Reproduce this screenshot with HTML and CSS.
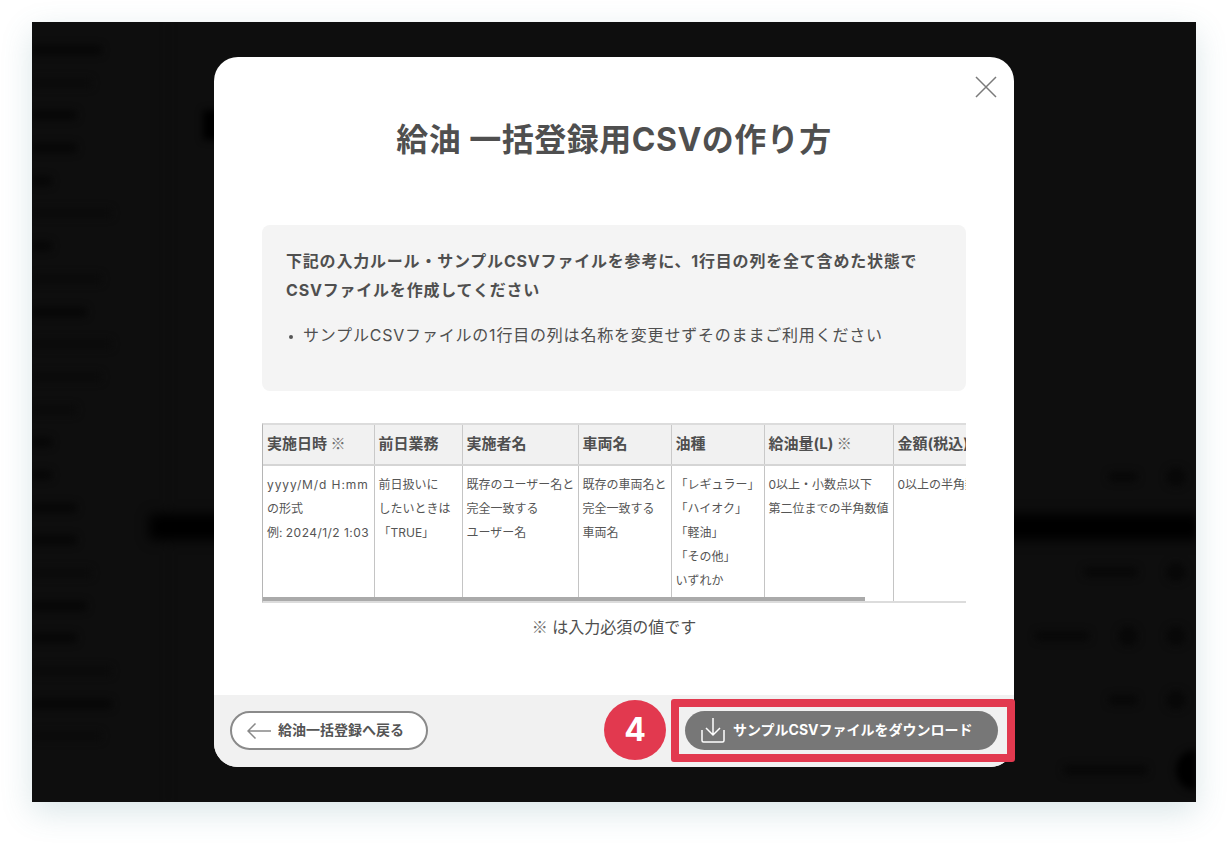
FILE: index.html
```html
<!DOCTYPE html>
<html lang="ja">
<head>
<meta charset="utf-8">
<title>給油 一括登録用CSVの作り方</title>
<link rel="stylesheet" href="styles.css">
</head>
<body>
<div class="frame">
  <div class="backdrop" aria-hidden="true">
    <div class="side">
      <i class="w70"></i><i class="w60 faint"></i><i class="w45"></i><i class="w45"></i><i class="w20"></i><i class="w80 faint"></i><i class="w20"></i><i class="w70 faint"></i><i class="w55"></i><i class="w80 faint"></i><i class="w70 faint"></i><i class="w45 faint"></i><i class="w20"></i><i class="w20"></i><i class="w45"></i><i class="w45"></i><i class="w60 faint"></i><i class="w55"></i><i class="w45"></i><i class="w80 faint"></i><i class="w80"></i><i class="w70 faint"></i>
    </div>
    <div class="main">
      <div class="blob-top"></div>
      <div class="blob-row r1"><b class="s60"></b><b class="dot"></b></div>
      <div class="band"></div>
      <div class="blob-row r2"><b class="s80"></b><b class="dot"></b></div>
      <div class="blob-row r3"><b class="s80"></b><b class="dot"></b><b class="dot"></b></div>
      <div class="blob-row r4"><b class="s60"></b><b class="dot"></b></div>
      <div class="blob-row r5"><b class="s110"></b><b class="big"></b></div>
    </div>
  </div>

  <section class="modal">
    <svg class="close" viewBox="0 0 22 22" width="22" height="22"><path d="M1 1l20 20M21 1L1 21"/></svg>
    <div class="body">
      <h1 class="title">給油 一括登録用CSVの作り方</h1>
      <div class="info">
        <p class="lead">下記の入力ルール・サンプルCSVファイルを参考に、1行目の列を全て含めた状態で<br>CSVファイルを作成してください</p>
        <ul class="rules"><li>サンプルCSVファイルの1行目の列は名称を変更せずそのままご利用ください</li></ul>
      </div>
      <div class="scroller">
        <table class="sheet">
          <colgroup><col class="c1"><col class="c2"><col class="c3"><col class="c4"><col class="c5"><col class="c6"><col class="c7"></colgroup>
          <thead>
            <tr><th>実施日時 <span class="mark">※</span></th><th>前日業務</th><th>実施者名</th><th>車両名</th><th>油種</th><th>給油量(L) <span class="mark">※</span></th><th>金額(税込)</th></tr>
          </thead>
          <tbody>
            <tr>
              <td><span class="fmt">yyyy/M/d H:mm</span><br>の形式<br>例: <span class="latin">2024/1/2 1:03</span></td>
              <td>前日扱いに<br>したいときは<br>「TRUE」</td>
              <td>既存のユーザー名と<br>完全一致する<br>ユーザー名</td>
              <td>既存の車両名と<br>完全一致する<br>車両名</td>
              <td>「レギュラー」<br>「ハイオク」<br>「軽油」<br>「その他」<br>いずれか</td>
              <td>0以上・小数点以下<br>第二位までの半角数値</td>
              <td>0以上の半角数値</td>
            </tr>
          </tbody>
        </table>
        <div class="thumb"></div>
      </div>
      <p class="note"><span class="mark">※</span> は入力必須の値です</p>
    </div>
    <footer class="foot">
      <a class="btn back">
        <svg viewBox="0 0 24 16" width="24" height="16"><path d="M24 8H1M8.500 .5L1 8l7.500 7.500"/></svg>
        <span class="lbl">給油一括登録へ戻る</span>
      </a>
      <a class="btn dl">
        <svg viewBox="0 0 24 25" width="24" height="25"><path d="M12 0v17M5 10l7 7 7-7M1 12v10.500a1.500 1.500 0 0 0 1.500 1.500h19a1.500 1.500 0 0 0 1.500-1.500V12"/></svg>
        <span class="lbl">サンプルCSVファイルをダウンロード</span>
      </a>
      <span class="badge">4</span>
      <span class="highlight"></span>
    </footer>
  </section>
</div>
</body>
</html>
```
FILE: styles.css
```css
* { box-sizing: border-box; }
html, body { margin: 0; height: 100%; background: #fff; }
body {
  padding: 22px 32px 0;
  font-family: Inter, "Noto Sans CJK JP", sans-serif;
  color: #4f4f4f;
  overflow: hidden;
}
.frame {
  position: relative;
  height: 780px;
  background: #0e0e0e;
  box-shadow: 0 10px 30px rgba(70, 130, 140, .2);
  overflow: hidden;
}
.backdrop { display: flex; height: 100%; overflow: hidden; filter: blur(3.500px); }
.side {
  width: 136px;
  flex: none;
  display: flex;
  flex-direction: column;
  gap: 22.700px;
  padding-top: 23px;
}
.side i { display: block; height: 10px; border-radius: 4px; background: #070707; }
.side i.faint { background: #0b0b0b; }
.w20 { width: 20px; } .w45 { width: 45px; } .w55 { width: 55px; }
.w60 { width: 60px; } .w70 { width: 70px; } .w80 { width: 80px; }
.main { flex: 1; display: flex; flex-direction: column; border-left: 1px solid #0c0c0c; }
.blob-top { height: 30px; margin: 88px 0 0 34px; width: 60px; background: #000; }
.blob-row { display: flex; justify-content: flex-end; align-items: center; gap: 28px; padding-right: 10px; height: 24px; }
.blob-row b { display: block; height: 10px; border-radius: 5px; background: #080808; }
.blob-row b.dot { width: 20px; height: 20px; border-radius: 50%; }
.blob-row b.s60 { width: 30px; }
.blob-row b.s80 { width: 55px; }
.blob-row b.s110 { width: 85px; }
.blob-row b.big { width: 36px; height: 40px; border-radius: 50%; background: #000; margin-right: -26px; }
.r1 { margin-top: 325px; }
.band { height: 26px; margin: 25px -20px 0; background: #000; filter: blur(5px); }
.r2 { margin-top: 20px; }
.r3 { margin-top: 40px; }
.r4 { margin-top: 40px; }
.r5 { margin-top: 46px; }

.modal {
  position: absolute;
  left: 182px;
  top: 35px;
  width: 800px;
  height: 710px;
  background: #fff;
  border-radius: 24px;
  display: flex;
  flex-direction: column;
}
.close { position: absolute; top: 19px; right: 17px; fill: none; stroke: #7a7a7a; stroke-width: 1.500; }
.body { flex: 1; padding: 0 48px; }
.title {
  margin: 60px 0 0;
  font-size: 32px;
  line-height: 46px;
  font-weight: 700;
  letter-spacing: .5px;
  text-align: center;
  color: #4f4f4f;
}
.info {
  margin-top: 62px;
  height: 166px;
  padding: 22px 24px;
  background: #f4f4f4;
  border-radius: 8px;
}
.lead { margin: 0; font-size: 16px; line-height: 29px; font-weight: 700; letter-spacing: .8px; }
.rules { margin: 16px 0 0; padding: 0; list-style: none; font-size: 16px; line-height: 29px; letter-spacing: .8px; }
.rules li { display: flex; align-items: center; }
.rules li::before { content: ""; width: 4px; height: 4px; margin: 3px 10px 0 3px; border-radius: 50%; background: #555; flex: none; }
.scroller {
  position: relative;
  margin-top: 32px;
  height: 180px;
  overflow: hidden;
  border-bottom: 2px solid #dcdcdc;
  border-top: 2px solid #dcdcdc;
  border-left: 1px solid #b5b5b5;
}
.sheet { width: 822px; border-collapse: collapse; table-layout: fixed; }
.c1 { width: 111px; } .c2 { width: 88px; } .c3 { width: 116px; } .c4 { width: 93px; }
.c5 { width: 93px; } .c6 { width: 129px; } .c7 { width: 192px; }
.sheet th {
  height: 40px;
  padding: 0 4px 4px;
  background: #f1f1f1;
  border-right: 1px solid #c9c9c9;
  border-bottom: 2px solid #d5d5d5;
  font-size: 15px;
  font-weight: 700;
  text-align: left;
  white-space: nowrap;
  color: #4f4f4f;
}
.mark { font-family: "Noto Sans CJK JP", sans-serif; font-weight: 400; color: #6f6f6f; }
.sheet td {
  height: 136px;
  padding: 7px 4px 0;
  vertical-align: top;
  border-right: 1px solid #c4c4c4;
  font-size: 12px;
  line-height: 24px;
  white-space: nowrap;
  color: #555;
}
.fmt { letter-spacing: .9px; }
.latin { letter-spacing: .45px; }
.thumb { position: absolute; left: -1px; bottom: 0; width: 603px; height: 4px; background: #aaa; }
.note { margin: 12px 0 0; text-align: center; font-size: 16px; line-height: 22px; color: #4f4f4f; }
.foot {
  position: relative;
  height: 72px;
  flex: none;
  display: flex;
  justify-content: space-between;
  align-items: flex-start;
  padding: 16px 16px 0;
  background: #f1f1f1;
  border-radius: 0 0 24px 24px;
}
.btn {
  display: flex;
  align-items: center;
  height: 39px;
  border-radius: 20px;
  font-size: 14px;
  font-weight: 700;
  white-space: nowrap;
}
.lbl { margin-bottom: 3px; }
.back { width: 198px; padding-left: 15px; gap: 7px; background: #fff; border: 2px solid #8a8a8a; color: #555; }
.back svg { fill: none; stroke: #888; stroke-width: 1.500; }
.dl { width: 313px; padding-left: 16px; gap: 8px; background: #777; color: #fff; }
.dl svg { fill: none; stroke: #fff; stroke-width: 1.500; }
.badge {
  position: absolute;
  left: 390px;
  top: 5px;
  width: 62px;
  height: 60px;
  border-radius: 50%;
  background: #e2394f;
  color: #fff;
  font-size: 32px;
  font-weight: 700;
  line-height: 60px;
  text-align: center;
}
.highlight {
  position: absolute;
  left: 457px;
  top: 4px;
  width: 344px;
  height: 63px;
  border: 8px solid #e2394f;
  border-radius: 3px;
}
```
